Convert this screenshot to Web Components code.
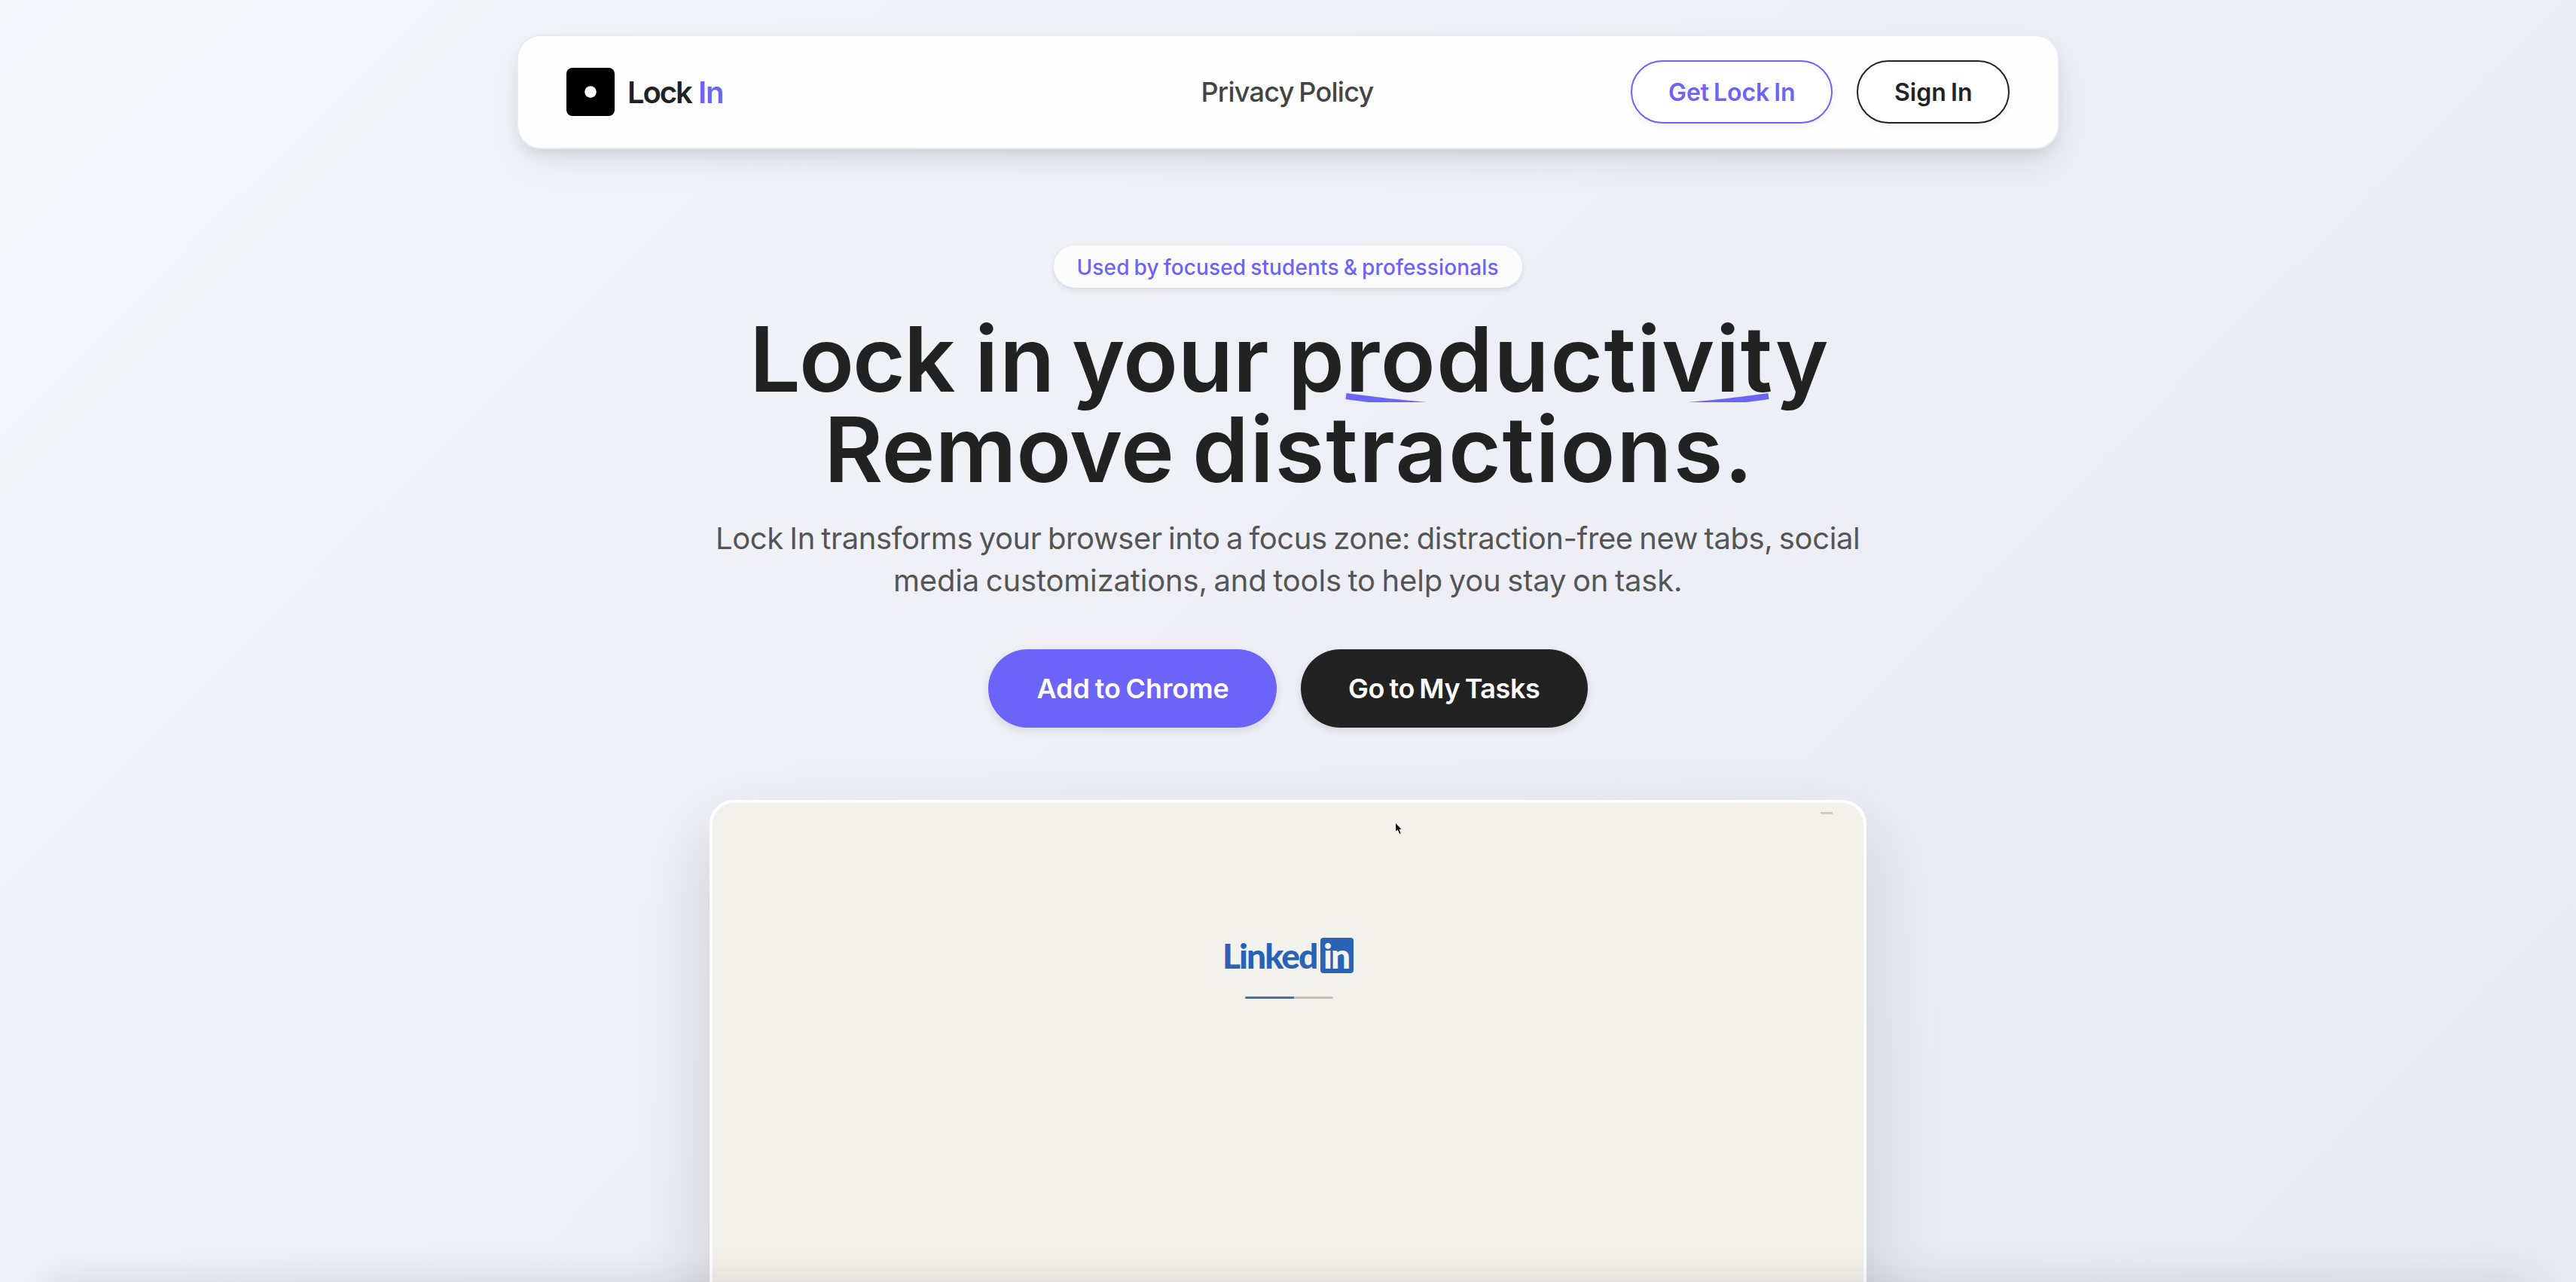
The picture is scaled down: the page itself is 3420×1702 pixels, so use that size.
<!DOCTYPE html>
<html lang="en">
<head>
<meta charset="utf-8">
<title>Lock In</title>
<style>
  html, body {
    margin: 0;
    height: 100%;
    overflow: hidden;
  }
  body {
    font-family: Inter, "Noto Sans", sans-serif;
    color: #222;
    --accent: #6c63f8;
    --dark: #222;
  }
</style>
</head>
<body>
<landing-page>
  <nav-bar slot="nav">
    <brand-logo slot="brand"></brand-logo>
    <fit-text slot="link" ink="227">Privacy Policy</fit-text>
    <pill-button slot="actions" kind="outline" style="width: 268px"><fit-text ink="166">Get Lock In</fit-text></pill-button>
    <pill-button slot="actions" kind="outline-dark" style="width: 203px"><fit-text ink="101">Sign In</fit-text></pill-button>
  </nav-bar>
  <hero-section>
    <fit-text slot="badge" ink="557">Used by focused students &amp; professionals</fit-text>
    <fit-text slot="line1" ink="265">Lock</fit-text>
    <fit-text slot="line1" ink="93">in</fit-text>
    <fit-text slot="line1" ink="258">your</fit-text>
    <under-line slot="line1"><fit-text ink="708">productivity</fit-text></under-line>
    <fit-text slot="line2" ink="452">Remove</fit-text>
    <fit-text slot="line2" ink="730">distractions.</fit-text>
    <fit-text slot="sub" ink="1514">Lock In transforms your browser into a focus zone: distraction-free new tabs, social</fit-text>
    <fit-text slot="sub" ink="1042">media customizations, and tools to help you stay on task.</fit-text>
    <pill-button slot="cta" kind="primary" style="width: 383px"><fit-text ink="254">Add to Chrome</fit-text></pill-button>
    <pill-button slot="cta" kind="dark" style="width: 381px"><fit-text ink="253">Go to My Tasks</fit-text></pill-button>
  </hero-section>
  <demo-video>
    <linkedin-splash></linkedin-splash>
  </demo-video>
</landing-page>

<script>
// One line of text, tracked so that its glyphs span exactly `ink` pixels.
class FitText extends HTMLElement {
  constructor() {
    super();
    this.attachShadow({ mode: "open" });
    this.shadowRoot.innerHTML = `
      <style>
        :host {
          display: block;
          flex: none;
          white-space: nowrap;
          text-align: left;
        }
      </style>
      <slot></slot>
    `;
  }

  connectedCallback() {
    const style = getComputedStyle(this);
    const ctx = document.createElement("canvas").getContext("2d");
    const text = this.textContent;
    const target = Number(this.getAttribute("ink"));
    // words sit a little closer together than the font's own space
    const wordGap = parseFloat(style.fontSize) * -0.06;
    const spaces = text.split(" ").length - 1;
    ctx.font = `${style.fontWeight} ${style.fontSize} ${style.fontFamily}`;
    const m = ctx.measureText(text);
    const ink = m.actualBoundingBoxLeft + m.actualBoundingBoxRight + wordGap * spaces;
    this.style.width = target + "px";
    this.style.wordSpacing = wordGap + "px";
    this.style.letterSpacing = (target - ink) / (text.length - 1) + "px";
    this.style.textIndent = m.actualBoundingBoxLeft + "px";
  }
}

class LandingPage extends HTMLElement {
  constructor() {
    super();
    this.attachShadow({ mode: "open" });
    this.shadowRoot.innerHTML = `
      <style>
        :host {
          display: flex;
          flex-direction: column;
          align-items: center;
          box-sizing: border-box;
          height: 100vh;
          padding-top: 46px;
          overflow: hidden;
          position: relative;
          background: linear-gradient(135deg, #f5f7fb 0%, #eeeff6 50%, #e7e9f4 100%);
        }
        /* shade cast by the section below the fold */
        #fold {
          position: absolute;
          left: 0;
          right: 0;
          bottom: -60px;
          height: 60px;
          margin: 0 60px;
          box-shadow: 0 0 56px rgba(0, 0, 0, 0.12);
        }
      </style>
      <slot name="nav"></slot>
      <slot></slot>
      <div id="fold"></div>
    `;
  }
}

class NavBar extends HTMLElement {
  constructor() {
    super();
    this.attachShadow({ mode: "open" });
    this.shadowRoot.innerHTML = `
      <style>
        :host {
          display: block;
          flex: none;
          box-sizing: border-box;
          width: 2048px;
          height: 152px;
          padding: 0 64px;
          border: 2px solid #ebecf3;
          border-radius: 32px;
          background: #fefefe;
          box-shadow: 0 20px 50px -6px rgba(0, 0, 0, 0.1), 0 8px 20px -6px rgba(0, 0, 0, 0.1);
        }
        nav {
          display: grid;
          grid-template-columns: 1fr auto 1fr;
          align-items: center;
          height: 100%;
        }
        #link {
          font-size: 36px;
          font-weight: 450;
          color: #444;
        }
        #actions {
          display: flex;
          justify-content: flex-end;
          gap: 32px;
        }
      </style>
      <nav>
        <slot name="brand"></slot>
        <div id="link"><slot name="link"></slot></div>
        <div id="actions"><slot name="actions"></slot></div>
      </nav>
    `;
  }
}

class BrandLogo extends HTMLElement {
  constructor() {
    super();
    this.attachShadow({ mode: "open" });
    this.shadowRoot.innerHTML = `
      <style>
        :host {
          display: flex;
          align-items: center;
          font-size: 40px;
          font-weight: 600;
          color: var(--dark);
        }
        svg { display: block; margin-right: 19px; }
        #in { color: var(--accent); margin-left: 9px; }
      </style>
      <svg width="64" height="64" viewBox="0 0 64 64">
        <rect width="64" height="64" rx="8" fill="#000"/>
        <circle cx="32" cy="32" r="7.8" fill="#fff"/>
      </svg>
      <fit-text ink="85">Lock</fit-text>
      <fit-text id="in" ink="30">In</fit-text>
    `;
  }
}

class PillButton extends HTMLElement {
  constructor() {
    super();
    this.attachShadow({ mode: "open" });
    this.shadowRoot.innerHTML = `
      <style>
        :host {
          display: flex;
          align-items: center;
          justify-content: center;
          box-sizing: border-box;
          height: 84px;
          border-radius: 52px;
          font-size: 32px;
          font-weight: 600;
          box-shadow: 0 4px 10px rgba(0, 0, 0, 0.05);
        }
        :host([kind="outline"]) {
          border: 2px solid var(--accent);
          color: var(--accent);
          background: #fff;
        }
        :host([kind="outline-dark"]) {
          border: 2px solid var(--dark);
          color: var(--dark);
          background: #fff;
        }
        :host([kind="primary"]),
        :host([kind="dark"]) {
          height: 104px;
          font-size: 36px;
          color: #fff;
          background: var(--accent);
          box-shadow: 0 4px 12px rgba(0, 0, 0, 0.1);
        }
        :host([kind="dark"]) {
          background: var(--dark);
        }
      </style>
      <slot></slot>
    `;
  }
}

class UnderLine extends HTMLElement {
  constructor() {
    super();
    this.attachShadow({ mode: "open" });
    this.shadowRoot.innerHTML = `
      <style>
        :host { display: block; position: relative; margin-left: 3px; }
        svg {
          position: absolute;
          left: 64px;
          top: 93px;
          overflow: hidden;
        }
      </style>
      <slot></slot>
      <svg width="580" height="24" viewBox="0 0 580 24">
        <path d="M5 16Q286 55 566 16" fill="none" stroke="#6c63f8" stroke-width="8"/>
      </svg>
    `;
  }
}

class HeroSection extends HTMLElement {
  constructor() {
    super();
    this.attachShadow({ mode: "open" });
    this.shadowRoot.innerHTML = `
      <style>
        :host {
          display: flex;
          flex: none;
          flex-direction: column;
          align-items: center;
          margin-top: 128px;
        }
        #badge {
          display: flex;
          justify-content: center;
          width: 622px;
          height: 56px;
          border-radius: 28px;
          background: #fcfcfd;
          box-shadow: 0 3px 7px rgba(40, 40, 80, 0.13);
          font-size: 28px;
          font-weight: 500;
          line-height: 58px;
          color: var(--accent);
        }
        h1 {
          margin: 35px 0 0;
          font-size: 120px;
          font-weight: 600;
          line-height: 120px;
        }
        .line {
          display: flex;
          justify-content: center;
          gap: 32px;
          padding-left: 9px;
        }
        .line + .line {
          gap: 34px;
          padding-left: 0;
        }
        #sub {
          display: flex;
          flex-direction: column;
          align-items: center;
          margin-top: 30px;
          font-size: 40px;
          line-height: 56px;
          color: #555;
        }
        #cta {
          display: flex;
          gap: 32px;
          margin-top: 63px;
        }
      </style>
      <div id="badge"><slot name="badge"></slot></div>
      <h1>
        <div class="line"><slot name="line1"></slot></div>
        <div class="line"><slot name="line2"></slot></div>
      </h1>
      <div id="sub"><slot name="sub"></slot></div>
      <div id="cta"><slot name="cta"></slot></div>
    `;
  }
}

class DemoVideo extends HTMLElement {
  constructor() {
    super();
    this.attachShadow({ mode: "open" });
    this.shadowRoot.innerHTML = `
      <style>
        :host {
          display: flex;
          flex: none;
          justify-content: center;
          position: relative;
          box-sizing: border-box;
          width: 1536px;
          height: 870px;
          margin-top: 96px;
          border: 4px solid #fff;
          border-radius: 32px;
          background: #f2f1ec;
          box-shadow: 0 40px 100px rgba(0, 0, 0, 0.15);
        }
        #cursor {
          position: absolute;
          left: 906px;
          top: 26px;
        }
        #dash {
          position: absolute;
          left: 1471px;
          top: 12px;
          width: 16px;
          height: 3px;
          background: #cacac5;
        }
      </style>
      <slot></slot>
      <svg id="cursor" width="10" height="18" viewBox="0 0 10 18">
        <path d="M1 1L1.3 11.5 3.6 9.6 6.2 15 7.6 14.3 5.6 9.2 8.4 8.8Z" fill="#111"/>
      </svg>
      <div id="dash"></div>
    `;
  }
}

// Loading screen inside the clip: wordmark and progress bar
class LinkedinSplash extends HTMLElement {
  constructor() {
    super();
    this.attachShadow({ mode: "open" });
    this.shadowRoot.innerHTML = `
      <style>
        :host {
          display: flex;
          flex-direction: column;
          align-items: center;
          padding: 179px 0 0 3px;
        }
        #mark {
          display: flex;
          gap: 5px;
          font-family: Lato, Inter, sans-serif;
          font-size: 46px;
          font-weight: 900;
          line-height: 47px;
          color: #2a62b7;
        }
        #box {
          display: flex;
          justify-content: center;
          width: 44px;
          height: 47px;
          border-radius: 4px;
          background: #2a62b7;
          color: #f1f3f5;
        }
        #bar {
          width: 117px;
          height: 3px;
          margin-top: 31px;
          border-radius: 2px;
          background: linear-gradient(90deg, #4870ad 65px, #c4c1b5 65px);
        }
      </style>
      <div id="mark">
        <fit-text ink="122">Linked</fit-text>
        <div id="box"><fit-text ink="32">in</fit-text></div>
      </div>
      <div id="bar"></div>
    `;
  }
}

customElements.define("landing-page", LandingPage);
customElements.define("nav-bar", NavBar);
customElements.define("brand-logo", BrandLogo);
customElements.define("pill-button", PillButton);
customElements.define("under-line", UnderLine);
customElements.define("hero-section", HeroSection);
customElements.define("demo-video", DemoVideo);
customElements.define("linkedin-splash", LinkedinSplash);
// last, so every line measures with its final font
customElements.define("fit-text", FitText);
</script>
</body>
</html>
